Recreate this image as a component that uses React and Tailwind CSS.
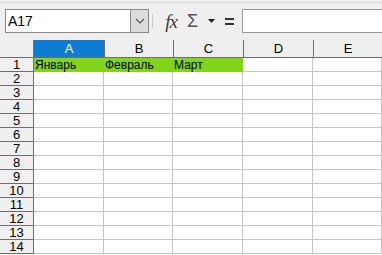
import React from 'react';

const COLS = ['A', 'B', 'C', 'D', 'E'];
const ROWS = Array.from({ length: 14 }, (_, i) => i + 1);
const FIRST_ROW = ['Январь', 'Февраль', 'Март'];

function Toolbar() {
  return (
    <div className="h-[40px] bg-[#efefef] flex flex-col">
      <div className="mt-[2px] h-[1px] bg-[#dadada]" />
      <div className="flex-1 flex items-center pb-[1px]">
        <div className="ml-[5px] w-[144px] h-[24px] flex bg-white border border-[#8a8a8a]">
          <div className="flex-1 flex items-center pl-[2px] text-[14px] text-black">A17</div>
          <div className="w-[18px] h-full bg-[#dcdcdc] border-l border-[#8a8a8a] flex items-center justify-center">
            <svg width="10" height="6" viewBox="0 0 10 6">
              <path d="M1 1 L5 5 L9 1" fill="none" stroke="#555" strokeWidth="1.2" />
            </svg>
          </div>
        </div>
        <div className="ml-[3px] w-[1px] h-[14px] bg-[#c8c8c8]" />
        <div className="ml-[9px] w-[18px] h-[20px] flex items-center justify-center">
          <span className="text-[19px] italic text-[#3c3c3c] font-['Liberation_Serif',serif] leading-none tracking-[-1px]">fx</span>
        </div>
        <div className="ml-[7px] text-[18px] text-[#555] leading-none font-['Liberation_Sans',sans-serif]">Σ</div>
        <svg className="ml-[10px]" width="7" height="4" viewBox="0 0 7 4">
          <path d="M0 0 L7 0 L3.5 4 Z" fill="#222" />
        </svg>
        <div className="ml-[10px] w-[9px] flex flex-col gap-[3px]">
          <div className="h-[2px] bg-[#333]" />
          <div className="h-[2px] bg-[#333]" />
        </div>
        <div className="ml-[8px] flex-1 h-[24px] bg-white border border-[#9a9a9a] border-r-0" />
      </div>
    </div>
  );
}

function Grid() {
  return (
    <div className="grid grid-cols-[34px_70px_69px_70px_70px_69px] grid-rows-[18px_repeat(14,14px)] text-[12px] leading-none">
      <div className="bg-[#efefef] border-r border-b border-[#6e6e6e]" />
      {COLS.map((c, i) => (
        <div
          key={c}
          className={
            i === 0
              ? 'bg-[#0e7cd3] text-white border-b border-[#6e6e6e] flex items-end justify-center pb-[2px] text-[13px]'
              : 'bg-[#efefef] text-black border-l border-b border-[#6e6e6e] flex items-end justify-center pb-[2px] text-[13px]'
          }
        >
          {c}
        </div>
      ))}
      {ROWS.map((r) => (
        <React.Fragment key={r}>
          <div className="bg-[#efefef] border-r border-b border-[#6e6e6e] flex items-center justify-center text-[13px] text-black">
            {r}
          </div>
          {COLS.map((c, i) => {
            const green = r === 1 && i < 3;
            return (
              <div
                key={c}
                className={
                  green
                    ? 'bg-[#81d41a] border-r border-b border-[#81d41a] flex items-center pl-[1px] text-black'
                    : 'bg-white border-r border-b border-[#c6c6c6] flex items-center pl-[1px]'
                }
              >
                {green ? FIRST_ROW[i] : ''}
              </div>
            );
          })}
        </React.Fragment>
      ))}
    </div>
  );
}

export default function App() {
  return (
    <div className="w-[382px] h-[255px] overflow-hidden bg-white font-['Liberation_Sans',Arial,sans-serif]">
      <Toolbar />
      <Grid />
    </div>
  );
}
